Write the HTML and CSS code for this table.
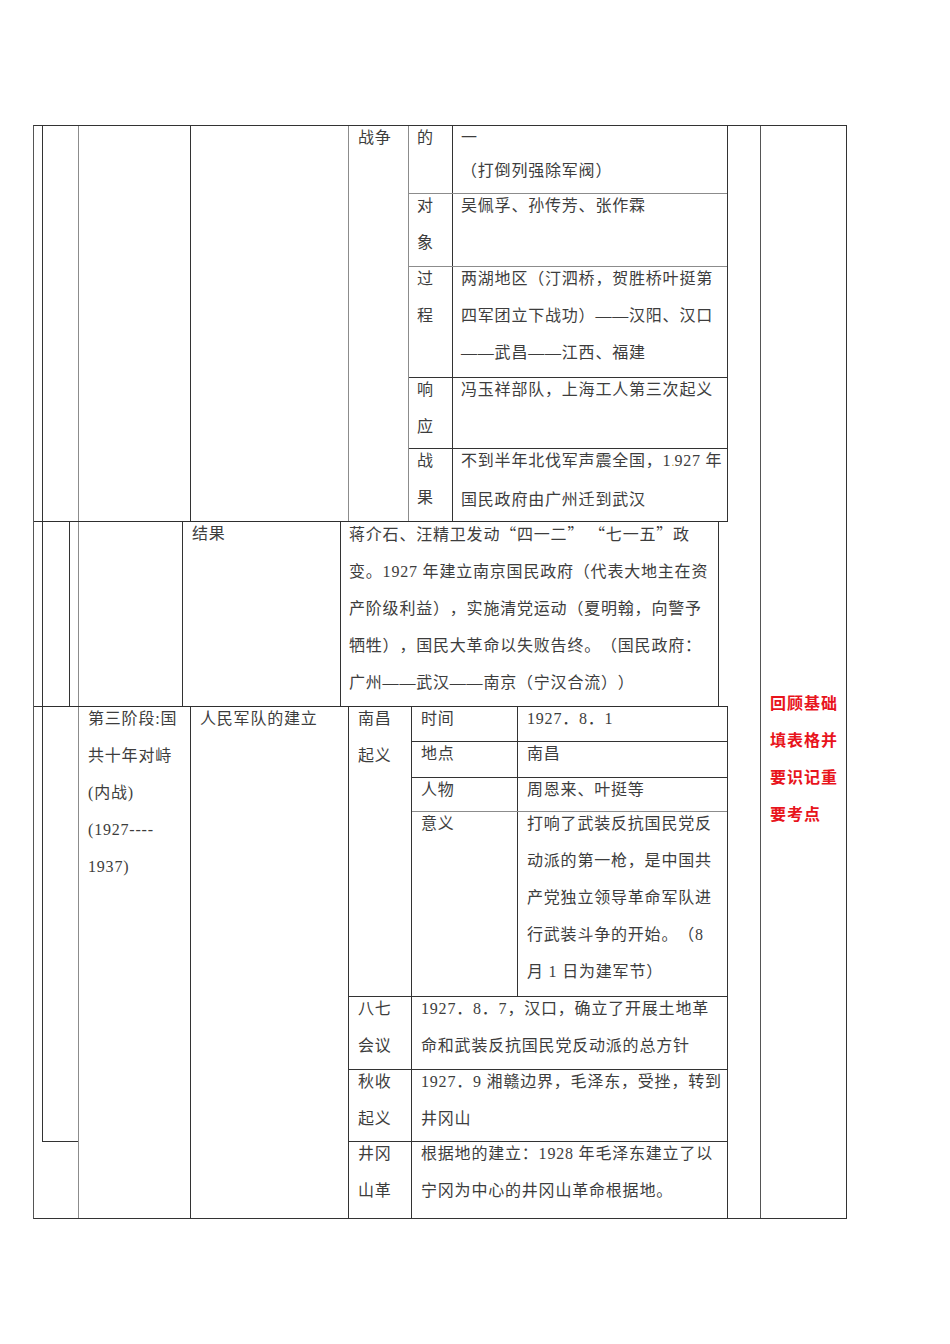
FILE: index.html
```html
<!DOCTYPE html>
<html lang="zh-CN">
<head>
<meta charset="utf-8">
<title>国民大革命与国共十年对峙</title>
<link rel="stylesheet" href="styles.css">
</head>
<body>
<div class="page">
  <div class="frame">
    <div class="main">
      <div class="tables">

        <section class="sec s1">
          <div class="c w8"></div>
          <div class="c w36 bl"></div>
          <div class="c w112 bl gl"></div>
          <div class="c w158 bl"></div>
          <div class="c w60 bl gl pad9"><p class="t">战争</p></div>
          <div class="inner bl gl br">
            <div class="irow h68 bb gb">
              <div class="lab"><p class="t">的</p></div>
              <div class="val bl"><p class="t tight">一<br>（打倒列强除军阀）</p></div>
            </div>
            <div class="irow h73 bb gb">
              <div class="lab"><p class="t">对<br>象</p></div>
              <div class="val bl"><p class="t">吴佩孚、孙传芳、张作霖</p></div>
            </div>
            <div class="irow h111 bb">
              <div class="lab"><p class="t">过<br>程</p></div>
              <div class="val bl"><p class="t">两湖地区（汀泗桥，贺胜桥叶挺第<br>四军团立下战功）——汉阳、汉口<br>——武昌——江西、福建</p></div>
            </div>
            <div class="irow h71 bb">
              <div class="lab"><p class="t">响<br>应</p></div>
              <div class="val bl"><p class="t">冯玉祥部队，上海工人第三次起义</p></div>
            </div>
            <div class="irow grow">
              <div class="lab"><p class="t">战<br>果</p></div>
              <div class="val bl"><p class="t">不到半年北伐军声震全国，1<span class="dot">.</span>927 年<br>国民政府由广州迁到武汉</p></div>
            </div>
          </div>
        </section>

        <section class="sec s2">
          <div class="c w8"></div>
          <div class="c w27 bl"></div>
          <div class="c w9 bl"></div>
          <div class="c w104 bl gl"></div>
          <div class="c w158 bl pad9"><p class="t">结果</p></div>
          <div class="c w378 bl pad8"><p class="t">蒋介石、汪精卫发动<span class="q">“</span>四一二<span class="q">”</span> <span class="q">“</span>七一五<span class="q">”</span>政<br>变。1927 年建立南京国民政府（代表大地主在资<br>产阶级利益），实施清党运动（夏明翰，向警予<br>牺牲），国民大革命以失败告终。（国民政府：<br>广州——武汉——南京（宁汉合流））</p></div>
          <div class="c w10 bl"></div>
        </section>

        <section class="sec s3">
          <div class="c w44">
            <div class="lbox"></div>
          </div>
          <div class="c w112 bl gl pad9"><p class="t">第三阶段:国<br>共十年对峙<br>(内战)<br>(1927----<br>1937)</p></div>
          <div class="c w158 bl pad9"><p class="t">人民军队的建立</p></div>
          <div class="sub bl br">
            <div class="srow h290 bb">
              <div class="slab"><p class="t">南昌<br>起义</p></div>
              <div class="nest bl">
                <div class="nrow h35 bb">
                  <div class="nlab"><p class="t">时间</p></div>
                  <div class="nval bl"><p class="t">1927．8．1</p></div>
                </div>
                <div class="nrow h36 bb">
                  <div class="nlab"><p class="t">地点</p></div>
                  <div class="nval bl"><p class="t">南昌</p></div>
                </div>
                <div class="nrow h34 bb gb">
                  <div class="nlab"><p class="t">人物</p></div>
                  <div class="nval bl"><p class="t">周恩来、叶挺等</p></div>
                </div>
                <div class="nrow grow">
                  <div class="nlab"><p class="t">意义</p></div>
                  <div class="nval bl"><p class="t">打响了武装反抗国民党反<br>动派的第一枪，是中国共<br>产党独立领导革命军队进<br>行武装斗争的开始。（8<br>月 1 日为建军节）</p></div>
                </div>
              </div>
            </div>
            <div class="srow h73 bb">
              <div class="slab"><p class="t">八七<br>会议</p></div>
              <div class="sval bl"><p class="t">1927．8．7，汉口，确立了开展土地革<br>命和武装反抗国民党反动派的总方针</p></div>
            </div>
            <div class="srow h72 bb">
              <div class="slab"><p class="t">秋收<br>起义</p></div>
              <div class="sval bl"><p class="t">1927．9 湘赣边界，毛泽东，受挫，转到<br>井冈山</p></div>
            </div>
            <div class="srow grow">
              <div class="slab"><p class="t">井冈<br>山革</p></div>
              <div class="sval bl"><p class="t">根据地的建立：1928 年毛泽东建立了以<br>宁冈为中心的井冈山革命根据地。</p></div>
            </div>
          </div>
        </section>

      </div>
      <div class="blank"></div>
    </div>
    <div class="side">
      <p class="note">回顾基础<br>填表格并<br>要识记重<br>要考点</p>
    </div>
  </div>
</div>
</body>
</html>
```

FILE: styles.css
```css
* {
  box-sizing: border-box;
}

html, body {
  margin: 0;
  padding: 0;
  background: #ffffff;
}

body {
  font-family: "Liberation Serif", "Noto Sans CJK SC", serif;
  font-size: 16px;
  color: #3d3d3d;
  letter-spacing: 0.8px;
  text-spacing-trim: space-all;
}

.page {
  width: 950px;
  height: 1344px;
  padding: 125px 0 0 33px;
}

.frame {
  width: 814px;
  height: 1094px;
  border: 1px solid #333333;
  border-left-color: #555555;
  display: flex;
}

.main {
  width: 726px;
  display: flex;
}

.tables {
  width: 694px;
  display: flex;
  flex-direction: column;
}

.blank {
  width: 32px;
}

.side {
  width: 86px;
  border-left: 1px solid #555555;
  padding: 558px 0 0 9px;
}

.note {
  margin: 0;
  font-family: "Noto Sans CJK SC", sans-serif;
  font-weight: 700;
  color: #e8141c;
  line-height: 37px;
  letter-spacing: 1px;
  white-space: nowrap;
}

/* sections */
.sec {
  display: flex;
  border-bottom: 1px solid #2e2e2e;
}

.s1 {
  height: 396px;
}

.s2 {
  height: 185px;
}

.s3 {
  flex: 1;
  border-bottom: none;
}

.c {
  height: 100%;
}

.bl {
  border-left: 1px solid #333333;
}

.gl {
  border-left-color: #8c8c8c;
}

.br {
  border-right: 1px solid #333333;
}

.bb {
  border-bottom: 1px solid #333333;
}

.gb {
  border-bottom-color: #8c8c8c;
}

.w8 { width: 8px; }
.w9 { width: 9px; }
.w10 { width: 10px; }
.w27 { width: 27px; }
.w36 { width: 36px; }
.w44 { width: 44px; }
.w60 { width: 60px; }
.w104 { width: 104px; }
.w112 { width: 112px; }
.w158 { width: 158px; }
.w378 { width: 378px; }

.pad8 { padding-left: 8px; }
.pad9 { padding-left: 9px; }

/* text */
.t {
  margin: -7px 0 0;
  line-height: 37px;
  white-space: nowrap;
}

.t.tight {
  line-height: 33px;
  margin-top: -5px;
}

.q {
  font-family: "Noto Sans CJK SC", sans-serif;
}

.dot {
  color: #d9a13a;
  letter-spacing: 0;
  font-size: 12px;
}

/* section 1 inner table */
.inner {
  width: 320px;
  height: 100%;
  display: flex;
  flex-direction: column;
}

.irow {
  display: flex;
}

.lab {
  width: 43px;
  padding-left: 8px;
}

.val {
  flex: 1;
  padding-left: 8px;
}

.h68 { height: 68px; }
.h73 { height: 73px; }
.h111 { height: 111px; }
.h71 { height: 71px; }
.h72 { height: 72px; }
.h290 { height: 290px; }
.h35 { height: 35px; }
.h36 { height: 36px; }
.h34 { height: 34px; }

.grow {
  flex: 1;
}

/* section 3 */
.lbox {
  margin-left: 8px;
  width: 36px;
  height: 435px;
  border-left: 1px solid #333333;
  border-bottom: 1px solid #333333;
}

.sub {
  width: 380px;
  height: 100%;
  display: flex;
  flex-direction: column;
}

.srow {
  display: flex;
}

.slab {
  width: 62px;
  padding-left: 9px;
}

.sval {
  flex: 1;
  padding-left: 9px;
}

.nest {
  flex: 1;
  display: flex;
  flex-direction: column;
}

.nrow {
  display: flex;
}

.nlab {
  width: 105px;
  padding-left: 9px;
}

.nval {
  flex: 1;
  padding-left: 9px;
}
```
